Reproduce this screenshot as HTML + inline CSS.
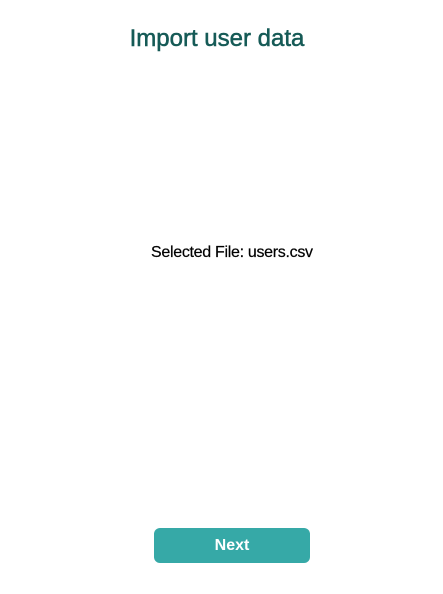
<!DOCTYPE html>
<html><head><style>
html,body{margin:0;padding:0;background:#fff;width:443px;height:594px;overflow:hidden;font-family:"Liberation Sans",Arial,sans-serif;}
.t{position:absolute;left:0;width:434px;text-align:center;top:25px;font-size:24px;color:#155a56;-webkit-text-stroke:0.5px #155a56;}
.f{position:absolute;left:151px;top:244px;font-size:16px;color:#000;letter-spacing:-0.3px;-webkit-text-stroke:0.2px #000;}
.b{position:absolute;left:154px;top:528px;width:156px;height:35px;background:#36a9a7;border-radius:6px;color:#fff;font-size:16px;font-weight:bold;text-align:center;line-height:36px;}
</style></head><body>
<div class="t">Import user data</div>
<div class="f">Selected File: users.csv</div>
<div class="b">Next</div>
</body></html>
